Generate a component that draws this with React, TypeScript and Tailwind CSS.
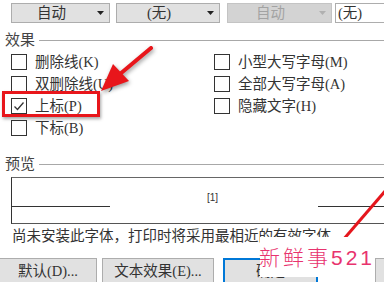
import React from "react";

const FONT = "'Liberation Serif', 'Noto Sans CJK SC', serif";

function Drop({ label, className, disabled }: { label: string; className: string; disabled?: boolean }) {
  return (
    <div
      className={
        "flex h-[20px] items-center border " +
        (disabled ? "border-[#c4c4c4] bg-[#d3d3d3] text-[#a3a3a3]" : "border-[#adadad] bg-[#e1e1e1] text-[#333]") +
        " " +
        className
      }
    >
      <div className="flex-1 text-center text-[14.5px] leading-none">{label}</div>
      <div className="flex w-[18px] justify-center">
        <svg width="7" height="4" viewBox="0 0 7 4">
          <path d="M0 0 L7 0 L3.5 4 Z" fill={disabled ? "#b0b0b0" : "#222"} />
        </svg>
      </div>
    </div>
  );
}

function Header({ title, className }: { title: string; className: string }) {
  return (
    <div className={"flex h-[17px] items-center pl-[5px] " + className}>
      <span className="text-[15px] leading-none text-[#444]">{title}</span>
      <div className="ml-[4px] h-px flex-1 bg-[#a8a8a8]" />
    </div>
  );
}

function Check({ label, checked }: { label?: string; checked?: boolean }) {
  if (!label) return <div className="h-[22px]" />;
  return (
    <div className="flex h-[22px] items-center gap-[8px] pl-[11px]">
      <div className="flex h-[16px] w-[16px] items-center justify-center border border-[#333] bg-white">
        {checked && (
          <svg width="14" height="14" viewBox="0 0 14 14">
            <path d="M2.5 7.5 L5.5 10.5 L11.5 3.5" fill="none" stroke="#333" strokeWidth="1.3" />
          </svg>
        )}
      </div>
      <span className="whitespace-nowrap text-[14.5px] leading-none text-[#333]">{label}</span>
    </div>
  );
}

function Btn({ label, className, focus }: { label: string; className: string; focus?: boolean }) {
  return (
    <div
      className={
        "flex h-[30px] shrink-0 justify-center bg-[#e1e1e1] " +
        (focus ? "border-2 border-[#0078d7] pt-[3px]" : "border border-[#adadad] pt-[4px]") +
        " " +
        className
      }
    >
      <span className="whitespace-nowrap text-[14.5px] leading-[16px] text-[#333]">{label}</span>
    </div>
  );
}

export default function App() {
  return (
    <div className="relative h-[282px] w-[384px] overflow-hidden bg-white" style={{ fontFamily: FONT }}>
      <div className="flex h-[23px] pt-[3px]">
        <Drop label="自动" className="ml-[11px] w-[99px] shrink-0" />
        <Drop label="(无)" className="ml-[6px] w-[104px] shrink-0" />
        <Drop label="自动" className="ml-[7px] w-[105px] shrink-0" disabled />
        <div className="ml-[3px] flex h-[20px] w-[60px] shrink-0 items-center border border-[#adadad] bg-white pl-[2px] text-[14.5px] leading-none text-[#333]">
          (无)
        </div>
      </div>

      <Header title="效果" className="mt-[9px]" />

      <div className="mt-[2px] grid grid-cols-[203px_1fr]">
        <Check label="删除线(K)" />
        <Check label="小型大写字母(M)" />
        <Check label="双删除线(U)" />
        <Check label="全部大写字母(A)" />
        <Check label="上标(P)" checked />
        <Check label="隐藏文字(H)" />
        <Check label="下标(B)" />
        <Check />
      </div>

      <Header title="预览" className="mt-[17px]" />

      <div className="ml-[11px] mt-[4px] flex h-[47px] w-[400px] flex-col border-b border-l border-t border-b-[#555] border-l-[#333] border-t-[#666] pt-[15px]">
        <div className="pl-[195px] text-[10px] leading-[10px] text-[#333]" style={{ fontFamily: "'Liberation Sans', sans-serif" }}>
          [1]
        </div>
        <div className="mt-[3px] flex">
          <div className="h-px w-[98px] bg-[#333]" />
          <div className="w-[208px]" />
          <div className="h-px flex-1 bg-[#333]" />
        </div>
      </div>

      <div className="flex h-[24px] items-center whitespace-nowrap pl-[12px] text-[14.5px] leading-none text-[#333]">
        尚未安装此字体，打印时将采用最相近的有效字体。
      </div>

      <div className="mt-[10px] flex">
        <Btn label="默认(D)..." className="ml-[-1px] w-[98px]" />
        <Btn label="文本效果(E)..." className="ml-[5px] w-[112px]" />
        <Btn label="确定" className="ml-[9px] w-[95px]" focus />
        <Btn label="取消" className="ml-[57px] w-[80px]" />
      </div>

      {/* red diagonal line at bottom right */}
      <svg className="pointer-events-none absolute left-0 top-0" width="384" height="282">
        <line x1="386" y1="190" x2="343" y2="240" stroke="#e5161d" strokeWidth="3" />
      </svg>

      {/* watermark */}
      <div className="absolute left-[260px] top-[237px] flex h-[40px] w-[114px] items-center justify-center bg-white">
        <span
          className="whitespace-nowrap text-[21px] leading-none tracking-[3px] text-[#e8336e]"
          style={{ fontFamily: "'Liberation Sans', 'Noto Sans CJK SC', sans-serif", fontWeight: 300 }}
        >
          新鲜事521
        </span>
      </div>

      {/* red highlight box */}
      <div className="absolute left-[2px] top-[91px] h-[26px] w-[98px] border-[3px] border-[#e8161b] shadow-[1px_2px_3px_rgba(0,0,0,0.35)]" />

      {/* arrow */}
      <svg
        className="pointer-events-none absolute left-0 top-0"
        width="384"
        height="282"
        style={{ filter: "drop-shadow(1px 2px 2px rgba(0,0,0,0.4))" }}
      >
        <line x1="151" y1="48" x2="120" y2="74" stroke="#e8161b" strokeWidth="4" strokeLinecap="round" />
        <polygon points="101,91 113,64 129,81" fill="#e8161b" />
      </svg>
    </div>
  );
}
